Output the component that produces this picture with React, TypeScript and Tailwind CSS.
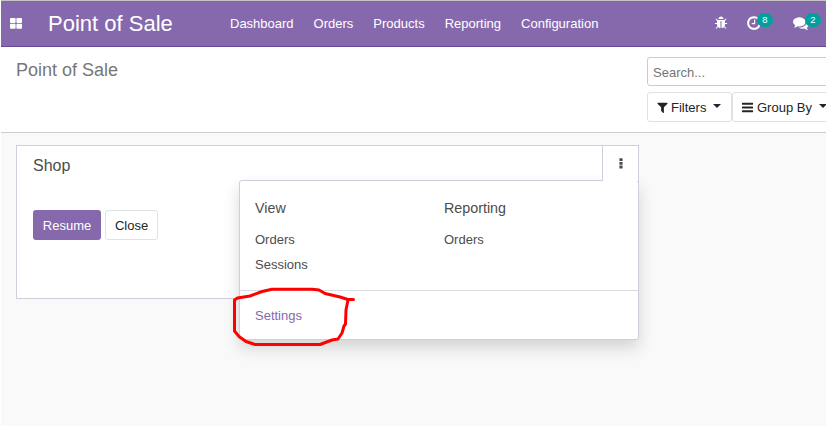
const paths = {
  bug: 'M1696 960q0 26-19 45t-45 19h-224q0 171-67 290l208 209q19 19 19 45t-19 45q-18 19-45 19t-45-19l-198-197q-5 5-15 13t-42 28.5-65 36.5-82 29-97 13V640H832v896q-51 0-101.5-13.5t-87-33-66-39-43.5-32.5l-15-14-183 207q-20 21-48 21-24 0-43-16-19-18-20.5-44.5t15.5-46.5l202-227q-58-114-58-274H160q-26 0-45-19t-19-45 19-45 45-19h224V602L211 429q-19-19-19-45t19-45 45-19 45 19l173 173h844l173-173q19-19 45-19t45 19 19 45-19 45l-173 173v294h224q26 0 45 19t19 45zm-480-576H576q0-133 93.5-226.5T896 64t226.5 93.5T1216 384z',
  clock: 'M1024 544v448q0 14-9 23t-23 9H672q-14 0-23-9t-9-23v-64q0-14 9-23t23-9h224V544q0-14 9-23t23-9h64q14 0 23 9t9 23zm416 352q0-148-73-273t-198-198-273-73-273 73-198 198-73 273 73 273 198 198 273 73 273-73 198-198 73-273zm224 0q0 209-103 385.5T1281.5 1561 896 1664t-385.5-103T231 1281.5 128 896t103-385.5T510.5 231 896 128t385.5 103T1561 510.5 1664 896z',
  comments: 'M1408 768q0 139-94 257t-256.5 186.5T704 1280q-86 0-176-16-124 88-278 128-36 9-86 16h-3q-11 0-20.5-8t-11.5-21q-1-3-1-6.5t.5-6.5 2-6l2.5-5 3.5-5.5 4-5 4.5-5 4-4.5q5-6 23-25t26-29.5 22.5-29 25-38.5 20.5-44q-124-72-195-177T0 768q0-139 94-257t256.5-186.5T704 256t353.5 68.5T1314 511t94 257zm384 256q0 120-71 224.5T1526 1425q10 24 20.5 44t25 38.5 22.5 29 26 29.5 23 25q1 1 4 4.5t4.5 5 4 5 3.5 5.5l2.5 5 2 6 .5 6.5-1 6.5q-3 14-13 22t-22 7q-50-7-86-16-154-40-278-128-90 16-176 16-271 0-472-132 58 4 88 4 161 0 309-45t264-129q125-92 192-212t67-254q0-77-23-152 129 71 204 178t75 230z',
  filter: 'M1595 295q17 41-14 70l-493 493v742q0 42-39 59-13 5-25 5-27 0-45-19l-256-256q-19-19-19-45v-486L211 365q-31-29-14-70 17-39 59-39h1280q42 0 59 39z',
  bars: 'M1664 1344v128q0 26-19 45t-45 19H192q-26 0-45-19t-19-45v-128q0-26 19-45t45-19h1408q26 0 45 19t19 45zm0-512v128q0 26-19 45t-45 19H192q-26 0-45-19t-19-45V832q0-26 19-45t45-19h1408q26 0 45 19t19 45zm0-512v128q0 26-19 45t-45 19H192q-26 0-45-19t-19-45V320q0-26 19-45t45-19h1408q26 0 45 19t19 45z',
};

function Icon({ name, className }: { name: keyof typeof paths; className: string }) {
  return (
    <svg viewBox="0 0 1792 1792" className={`shrink-0 fill-current ${className}`}>
      <path d={paths[name]} />
    </svg>
  );
}

function AppsIcon() {
  return (
    <svg viewBox="0 0 12 11" className="mb-px ml-[9px] h-[11px] w-3 shrink-0 fill-current">
      <rect x="0" y="0" width="5.6" height="5" rx="0.8" />
      <rect x="6.4" y="0" width="5.6" height="5" rx="0.8" />
      <rect x="0" y="5.8" width="5.6" height="5" rx="0.8" />
      <rect x="6.4" y="5.8" width="5.6" height="5" rx="0.8" />
    </svg>
  );
}

function Caret() {
  return <span className="mb-[3px] h-0 w-0 shrink-0 border-x-4 border-t-4 border-x-transparent border-t-[#212529]" />;
}

function Badge({ count, className }: { count: number; className: string }) {
  return (
    <span className={`absolute -top-[2px] flex h-[14px] w-4 items-center justify-center rounded-full bg-[#00a09d] text-[9.5px] leading-none text-white ${className}`}>
      {count}
    </span>
  );
}

export default function App() {
  return (
    <div className="h-[426px] w-[826px] overflow-hidden border-l border-white bg-[#f9f9f9] font-['Liberation_Sans',Arial,sans-serif] text-[13px] leading-5 text-[#4c4c4c]">
      <header className="flex h-[47px] items-center border-t border-b border-t-[#c4c4c4] border-b-[#6b4596] bg-[#8669ad] text-white">
        <AppsIcon />
        <h1 className="ml-[26px] w-[182px] text-[22px] whitespace-nowrap">Point of Sale</h1>
        <nav className="flex flex-1 gap-5">
          <a>Dashboard</a>
          <a>Orders</a>
          <a>Products</a>
          <a>Reporting</a>
          <a>Configuration</a>
        </nav>
        <div className="flex w-[112px] items-center pb-px">
          <Icon name="bug" className="h-[14px] w-[14px]" />
          <div className="relative ml-[18px]">
            <Icon name="clock" className="h-4 w-4" />
            <Badge count={8} className="left-[11px]" />
          </div>
          <div className="relative ml-[31px]">
            <Icon name="comments" className="h-4 w-4" />
            <Badge count={2} className="left-3" />
          </div>
        </div>
      </header>

      <section className="flex h-[86px] justify-between border-b border-[#cccccc] bg-white">
        <h2 className="ml-[15px] pt-[13px] text-[18px] text-[#777777]">Point of Sale</h2>
        <div className="w-[179px] shrink-0 pt-[10px]">
          <div className="flex h-[29px] w-[240px] items-center rounded-[3px] border border-[#cccccc] px-[5px] pt-[2px] text-[#757575]">
            Search...
          </div>
          <div className="mt-[6px] flex w-[240px] text-[#212529]">
            <button className="flex h-[30px] w-[85px] items-center rounded-[3px] border border-[#dee2e6] pl-2">
              <Icon name="filter" className="h-[13px] w-[13px]" />
              <span className="mr-[7px] ml-[2px] pt-px">Filters</span>
              <Caret />
            </button>
            <button className="flex h-[30px] w-[110px] items-center rounded-[3px] border border-[#dee2e6] pl-2">
              <Icon name="bars" className="h-[13px] w-[13px]" />
              <span className="mr-[7px] ml-[3px] pt-px whitespace-nowrap">Group By</span>
              <Caret />
            </button>
          </div>
        </div>
      </section>

      <main className="px-[15px] pt-3">
        <article className="relative h-[154px] w-[623px] border border-[#cfcfdd] bg-white">
          <div className="flex justify-between">
            <h3 className="pt-[10px] pl-4 text-base leading-5">Shop</h3>
            <div className="z-20 flex h-[35px] w-[36px] items-center justify-center border-l border-[#cfcfdd] bg-white">
              <svg viewBox="0 0 4 11" className="h-[11px] w-1 fill-[#4c4c4c]">
                <rect x="0.4" y="0.2" width="3.2" height="2.8" rx="0.5" />
                <rect x="0.4" y="3.9" width="3.2" height="2.8" rx="0.5" />
                <rect x="0.4" y="7.6" width="3.2" height="2.8" rx="0.5" />
              </svg>
            </div>
          </div>
          <div className="mt-[29px] ml-4 flex gap-1">
            <button className="h-[30px] w-[68px] rounded-[3px] bg-[#8669ad] pt-px text-white">Resume</button>
            <button className="h-[30px] w-[53px] rounded-[3px] border border-[#dee2e6] pt-px text-[#212529]">Close</button>
          </div>

          <div className="absolute top-[34px] -right-px z-10 h-[160px] w-[400px] rounded-[3px] border border-[#cfcfdd] bg-white shadow-[0_8px_16px_rgba(0,0,0,0.15)]">
            <div className="flex h-[110px] border-b border-[#d9dbe3] pt-[17px] pl-[15px]">
              <div className="w-[189px]">
                <h4 className="text-[14.3px]">View</h4>
                <p className="mt-3">Orders</p>
                <p className="mt-[5px]">Sessions</p>
              </div>
              <div>
                <h4 className="text-[14.3px]">Reporting</h4>
                <p className="mt-3">Orders</p>
              </div>
            </div>
            <a className="block pt-[15px] pl-[15px] text-[#8669ad]">Settings</a>
            <svg viewBox="230 284 130 66" className="pointer-events-none absolute top-[103px] -left-[10px] h-[66px] w-[130px]">
              <path
                d="M353.5 299.5H348L340 297L325 293.5L319 290L312 289.3H272L262 291.5L250 296L237.5 298L234.5 300V331L239 336.5L246 341.5L255 344.5H320L332 340L338 339L342 333L344 326L345.5 324L346 310L348 300"
                fill="none"
                stroke="#ff0000"
                strokeWidth="3"
                strokeLinejoin="round"
                strokeLinecap="round"
              />
            </svg>
          </div>
        </article>
      </main>
    </div>
  );
}
